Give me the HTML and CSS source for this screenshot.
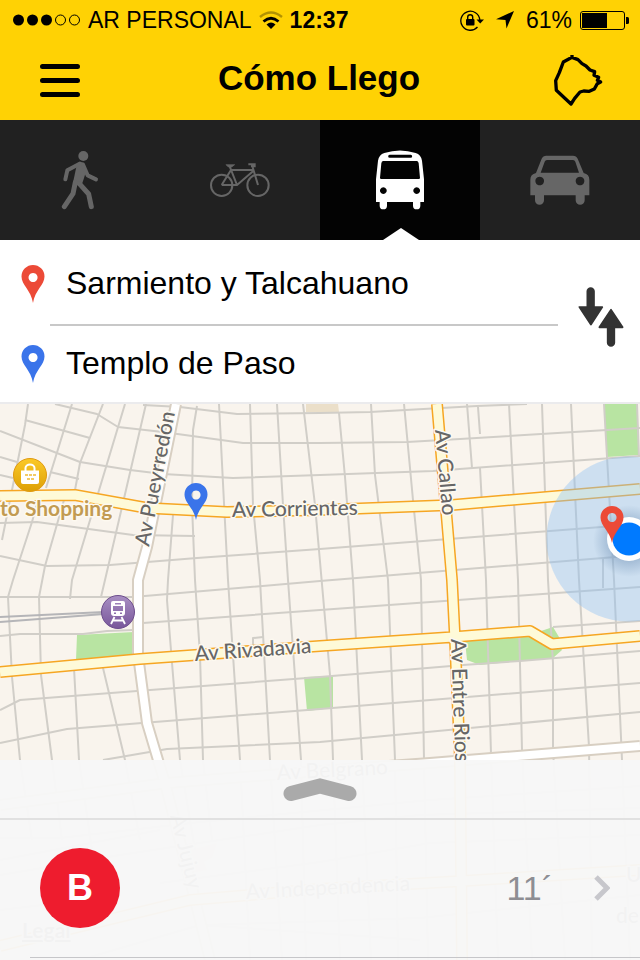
FILE: index.html
```html
<!DOCTYPE html>
<html lang="es">
<head>
    <meta charset="UTF-8">
    <meta name="viewport" content="width=device-width, initial-scale=1.0">
    <title>Cómo Llego</title>
    <link rel="stylesheet" href="styles.css">
</head>
<body>
    <header class="top">
        <div class="status">
            <svg class="signal" width="67" height="12" viewBox="0 0 67 12" aria-hidden="true">
                <circle cx="5.5" cy="6" r="5.5"/>
                <circle cx="19.5" cy="6" r="5.5"/>
                <circle cx="33.5" cy="6" r="5.5"/>
                <circle cx="47.5" cy="6" r="5" fill="none" stroke="#000"/>
                <circle cx="61.5" cy="6" r="5" fill="none" stroke="#000"/>
            </svg>
            <span class="carrier">AR PERSONAL</span>
            <svg class="wifi" width="24" height="19" viewBox="0 0 24 19" fill="none" stroke="#000" aria-hidden="true">
                <path d="M1 6Q12 -3 23 6" stroke-width="2.5" opacity=".3"/>
                <path d="M4.5 10.5Q12 4 19.500 10.5" stroke-width="2.8"/>
                <path d="M7.5 13.5Q12 9.5 16.500 13.5L12 18Z" fill="#000" stroke="none"/>
            </svg>
            <span class="clock">12:37</span>
            <div class="status-right">
                <svg width="24" height="21" viewBox="0 0 24 21" aria-hidden="true">
                    <path d="M17.5 17A9.5 9.5 0 1 1 19.8 10" fill="none" stroke="#000" stroke-width="1.3"/>
                    <path d="M16.5 9.5H24L20.2 13.5Z"/>
                    <rect x="6" y="9" width="8.5" height="6.5" rx="1"/>
                    <path d="M7.7 9V7.2a2.5 2.5 0 0 1 5 0V9" fill="none" stroke="#000" stroke-width="1.4"/>
                </svg>
                <svg width="18" height="18" viewBox="0 0 18 18" aria-hidden="true">
                    <path d="M18 0 10.5 17.5 9.5 9 0 8.3Z"/>
                </svg>
                <span>61%</span>
                <svg class="battery" width="49" height="19" viewBox="0 0 49 19" aria-hidden="true">
                    <rect x=".5" y=".5" width="44" height="18" rx="2.5" fill="none" stroke="#000"/>
                    <rect x="2" y="2" width="25" height="15"/>
                    <path d="M46 6h1.500a1.5 1.5 0 0 1 1.5 1.5v4a1.5 1.5 0 0 1-1.5 1.5H46z"/>
                </svg>
            </div>
        </div>
        <div class="navbar">
            <button type="button" class="icon-btn" aria-label="Menú">
                <svg width="40" height="33" viewBox="0 0 40 33" stroke="#000" stroke-width="5" stroke-linecap="round">
                    <path d="M2.5 2.5h35M2.5 16.5h35M2.5 30.5h35"/>
                </svg>
            </button>
            <h1>Cómo Llego</h1>
            <button type="button" class="icon-btn" aria-label="Ciudad">
                <svg width="52" height="54" viewBox="700 156 156 162" fill="none" stroke="#000" stroke-width="10" stroke-linejoin="round">
                    <path d="M760 162V169L734 183 722 215 711 239 713 268 757 309 768 292 784 273 795 270 812 271 827 264 836 248 846 243 836 238 840 229 826 223 828 212 814 207 802 195 790 188 778 176 760 169"/>
                </svg>
            </button>
        </div>
    </header>

    <nav class="modes">
        <button type="button" class="mode" aria-label="A pie">
            <svg width="38" height="60" viewBox="186 90 114 180" fill="none" stroke="#666" stroke-linecap="round" stroke-linejoin="round">
                <circle cx="253" cy="108" r="15" fill="#666" stroke="none"/>
                <path d="M234 132Q246 120 257 132L260 158 248 196 222 188 230 150Z" fill="#666" stroke="none"/>
                <path d="M242 131 205 151 199 178M252 134 266 166 291 178" stroke-width="12"/>
                <path d="M229 187 222 221 196 260M241 191 269 222 277 260" stroke-width="15"/>
            </svg>
        </button>
        <button type="button" class="mode" aria-label="Bicicleta">
            <svg width="60" height="34" viewBox="629 127 180 102" fill="none" stroke="#666" stroke-width="6">
                <circle cx="664" cy="194" r="32"/>
                <circle cx="773" cy="194" r="32"/>
                <path d="M664 193H710L758 152M664 193 692 148H758M688 137 710 193M773 193 757 140M744 131H763V137H752"/>
                <path d="M677 132H703L694 139H684Z" fill="#666" stroke-width="2"/>
            </svg>
        </button>
        <button type="button" class="mode active" aria-label="Colectivo" aria-current="true">
            <svg width="48" height="60" viewBox="165 92 144 180" fill="#fff">
                <path fill-rule="evenodd" d="M171 124Q174 106 190 101 237 86 284 101 300 106 303 124L309 180V248H298V259a11 11 0 0 1-22 0V248H198V259a11 11 0 0 1-22 0V248H165V180ZM206 106a4 4 0 0 0 0 9H269a4 4 0 0 0 0-9ZM187 125Q182 125 181 132L177 176Q177 179 181 179H293Q297 179 297 176L293 132Q292 125 287 125ZM187 204a10 10 0 1 0 .1 0ZM287 204a10 10 0 1 0 .1 0Z"/>
            </svg>
        </button>
        <button type="button" class="mode" aria-label="Auto">
            <svg width="60" height="50" viewBox="632 106 180 150" fill="#666">
                <path fill-rule="evenodd" d="M650 160 667 117Q671 108 681 108H761Q771 108 775 117L793 160Q810 164 810 180V227H796V242a13 13 0 0 1-27 0V227H674V242a13 13 0 0 1-27 0V227H633V180Q633 164 650 160ZM683 121Q678 121 676 126L664 159H779L768 126Q766 121 761 121ZM661 171a13 13 0 1 0 .1 0ZM782 171a13 13 0 1 0 .1 0Z"/>
            </svg>
        </button>
    </nav>

    <form class="route">
        <div class="fields">
            <div class="field">
                <label for="from" aria-label="Desde">
                    <svg width="24" height="38" viewBox="0 0 24 38"><path fill="#ec4a37" fill-rule="evenodd" d="M12 0A11.5 11.5 0 0 1 23.500 11.5C23.500 20 14 25 12 38 10 25 .5 20 .5 11.5A11.5 11.5 0 0 1 12 0ZM12 8a4.5 4.5 0 1 0 .1 0Z"/></svg>
                </label>
                <input type="text" id="from" value="Sarmiento y Talcahuano">
            </div>
            <hr>
            <div class="field">
                <label for="to" aria-label="Hasta">
                    <svg width="24" height="38" viewBox="0 0 24 38"><path fill="#3a74ea" fill-rule="evenodd" d="M12 0A11.5 11.5 0 0 1 23.500 11.5C23.500 20 14 25 12 38 10 25 .5 20 .5 11.5A11.5 11.5 0 0 1 12 0ZM12 8a4.5 4.5 0 1 0 .1 0Z"/></svg>
                </label>
                <input type="text" id="to" value="Templo de Paso">
            </div>
        </div>
        <button type="button" class="swap" aria-label="Invertir">
            <svg width="46" height="60" viewBox="773 112 138 180" fill="#333" stroke="#333" stroke-linejoin="round">
                <path d="M811 125V175M872 235V279" stroke-width="25" stroke-linecap="round"/>
                <path d="M777 172H846L812 225ZM837 233H907L872 180Z" stroke-width="5"/>
            </svg>
        </button>
    </form>

    <main class="map">
        <svg class="canvas" viewBox="0 404 640 556" preserveAspectRatio="xMidYMin slice">
            <defs>
                <linearGradient id="gold" x1="0" y1="0" x2="0" y2="1">
                    <stop offset="0" stop-color="#fbc928"/>
                    <stop offset="1" stop-color="#dda006"/>
                </linearGradient>
                <linearGradient id="purple" x1="0" y1="0" x2="0" y2="1">
                    <stop offset="0" stop-color="#a98fc3"/>
                    <stop offset="1" stop-color="#78569a"/>
                </linearGradient>
                <radialGradient id="shade">
                    <stop offset=".5" stop-color="#5b7fa8" stop-opacity=".4"/>
                    <stop offset="1" stop-color="#5b7fa8" stop-opacity="0"/>
                </radialGradient>
            </defs>
            <rect y="404" width="640" height="556" fill="#f9f4ed"/>

            <!-- parks and blocks -->
            <path class="block" d="M306 404H338L339 412H306ZM190 850 217 843 212 858 204 862 207 870 192 873Z"/>
            <path class="park" d="M604 404H637L639 455 607 457ZM77 635 134 632V655L76 660ZM304 677 333 676V708L307 711ZM465 641 535 636 552 646 558 642 562 650 553 658 480 665 467 660ZM538 632 553 627 562 642 552 646Z"/>

            <!-- side streets, west to east -->
            <path class="street" d="M143 405 180 407 237 414 320 413 370 412 477 406 527 404
                M55 404 97 414 118 427 163 432 243 443 320 443 407 442 460 439 640 428
                M0 431 80 462 130 470 163 474 233 478 320 475 433 471 473 468 640 456
                M25 420 90 438M50 472 79 479M0 457 17 462M0 475 13 478
                M0 523 37 522 133 535 195 536
                M0 556 47 566 110 565 197 558 320 549 640 524
                M0 597H133L320 581 640 555
                M143 623 320 610 640 587
                M0 636 20 634H83L107 631 133 630M553 627 640 621
                M0 710 20 700 137 691 320 677 463 665 520 661 640 651
                M0 743 67 729 142 723 320 709 640 683
                M103 760 167 749 320 742 640 712
                M253 649V638L263 637"/>
            <!-- side streets, north to south -->
            <path class="street" d="M28 404 25 425 2 540M72 404 46 488M103 404 80 463 75 490
                M38 500 32 522 13 580 8 597 12 677 20 760 32 840
                M64 500 45 566 39 597 41 675 52 760 62 840
                M125 404 72 580 70 599M146 404 105 580 101 597
                M74 668 79 760 92 850M103 668 125 760 140 840
                M173 515 168 580 167 600 172 663 180 760 195 850
                M197 406 193 430 192 505 195 580 200 655 203 760 212 840
                M219 404 224 503 228 580 240 760 250 960
                M250 404 253 505 260 580 270 760 282 960
                M277 404 283 505 288 580 301 760 306 960
                M303 404 315 505 330 675 333 760 340 960
                M339 413 345 477 353 580 362 760 371 960
                M371 404 375 475 388 580 395 760 398 960
                M404 404 413 500 421 580 424 760 428 960
                M467 404 472 468M478 407 480 434M480 468 486 580 491 754 498 960
                M509 404 518 580 522 750 532 960
                M542 404 548 580 553 663V750L565 960
                M571 404 579 580 589 747 592 960
                M604 404 614 580 622 760 630 960M637 404 639 457M603 558V588"/>
            <!-- south of Belgrano -->
            <path class="street" d="M0 838H60L200 822 430 800 640 786M0 875 120 855 320 825 420 815 640 808
                M0 860 160 830M0 910 120 896M160 883 320 862 430 843 640 835M205 925 420 918 640 895M90 957 200 925 420 940"/>
            <path class="rail" d="M0 617 104 612M0 622 104 614"/>

            <!-- avenues -->
            <path class="road-edge" d="M176 404 147 547 138 580V655L147 723 158 760 165 783 195 900 210 960M0 805 167 783 320 771 430 763 640 746"/>
            <path class="road" d="M176 404 147 547 138 580V655L147 723 158 760 165 783 195 900 210 960M0 805 167 783 320 771 430 763 640 746"/>
            <path class="avenue-edge" d="M437 404 452 580 455 640 460 760 462 960M0 496 75 495 147 508 227 512 320 510 452 505 640 489M0 672 140 659 320 646 453 637 530 631 552 644 640 636M0 946 190 900 320 889 463 881 640 870"/>
            <path class="avenue" d="M437 404 452 580 455 640 460 760 462 960M0 496 75 495 147 508 227 512 320 510 452 505 640 489M0 672 140 659 320 646 453 637 530 631 552 644 640 636M0 946 190 900 320 889 463 881 640 870"/>

            <!-- labels -->
            <g class="labels">
                <text transform="translate(149 547) rotate(-79)">Av Pueyrredón</text>
                <text transform="translate(232 517) rotate(-1)">Av Corrientes</text>
                <text transform="translate(435 430) rotate(85)">Av Callao</text>
                <text transform="translate(195 661) rotate(-4)">Av Rivadavia</text>
                <text transform="translate(451 639) rotate(88)">Av Entre Rios</text>
                <text transform="translate(277 780) rotate(-3)">Av Belgrano</text>
                <text transform="translate(170 816) rotate(76)">Av Jujuy</text>
                <text transform="translate(246 899) rotate(-3)">Av Independencia</text>
                <text x="626" y="882">U</text>
                <text x="616" y="923">de</text>
                <text class="legal" x="22" y="938">Legal</text>
                <text class="shop" x="0" y="516">to Shopping</text>
            </g>

            <!-- places -->
            <circle cx="30" cy="475" r="16.5" fill="url(#gold)" stroke="#e09a10"/>
            <path d="M21 470.5H39V482Q39 484 37 484H23Q21 484 21 482Z" fill="#fff"/>
            <path d="M25.5 471V468a4.5 3.5 0 0 1 9 0V471" fill="none" stroke="#fff" stroke-width="2"/>
            <path d="M25 475H36M27 479H34" stroke="#efbb33" stroke-width="1.5" stroke-dasharray="3 1"/>
            <circle cx="118" cy="612" r="16.5" fill="url(#purple)" stroke="#6d4d8d"/>
            <path d="M113 601H123Q125 601 125 603V613Q125 616 122 616H114Q111 616 111 613V603Q111 601 113 601ZM115 603V604.5H121V603ZM113 606V611H123V606ZM114 612.5V614H116V612.5ZM120 612.5V614H122V612.5Z" fill="#fff" fill-rule="evenodd"/>
            <path d="M114.5 617 111 624M121.5 617 125 624M113 620.5H123" stroke="#fff" stroke-width="1.8"/>

            <!-- current position -->
            <circle cx="629" cy="539" r="82.5" fill="#8dc0f4" fill-opacity=".4"/>
            <circle cx="629" cy="541" r="36" fill="url(#shade)"/>
            <circle cx="629" cy="539" r="22" fill="#fff"/>
            <circle cx="629" cy="539" r="16.5" fill="#007aff"/>
            <path transform="translate(600 506)" fill="#ec4a37" fill-rule="evenodd" d="M12 0A11.5 11.5 0 0 1 23.500 11.5C23.500 20 14 25 12 37 10 25 .5 20 .5 11.5A11.5 11.5 0 0 1 12 0ZM12 7a4.5 4.5 0 1 0 .1 0Z"/>
            <path transform="translate(184 483)" fill="#3a74ea" fill-rule="evenodd" d="M12 0A11.5 11.5 0 0 1 23.500 11.5C23.500 20 14 25 12 37 10 25 .5 20 .5 11.5A11.5 11.5 0 0 1 12 0ZM12 7.500a4.5 4.5 0 1 0 .1 0Z"/>
        </svg>

        <section class="sheet">
            <button type="button" class="handle" aria-label="Ver recorridos">
                <svg width="74" height="26" viewBox="0 0 74 26" fill="none" stroke="#aaa" stroke-width="15" stroke-linecap="round">
                    <path d="M8 17.5 37 10 66 17.5"/>
                </svg>
            </button>
            <a href="#" class="result">
                <span class="line">B</span>
                <span class="minutes">11´</span>
                <svg width="16" height="26" viewBox="0 0 16 26" fill="none" stroke="#c7c7cc" stroke-width="5">
                    <path d="M2 2 13 13 2 24"/>
                </svg>
            </a>
        </section>
    </main>
</body>
</html>
```
FILE: styles.css
```css
* {
    box-sizing: border-box;
}
body {
    margin: 0;
    min-height: 100vh;
    display: flex;
    flex-direction: column;
    font-family: "Liberation Sans", Arial, sans-serif;
    color: #000;
    background: #fff;
}
svg {
    display: block;
    flex-shrink: 0;
}
button {
    border: none;
    padding: 0;
    background: none;
    cursor: pointer;
}

/* header */
.top {
    background: #ffd204;
}
.status {
    display: flex;
    align-items: center;
    height: 40px;
    padding: 0 11px 0 13px;
    font-size: 23px;
    white-space: nowrap;
}
.carrier {
    margin: 0 7px 0 8px;
}
.clock {
    margin-left: 7px;
    font-weight: bold;
}
.status-right {
    display: flex;
    align-items: center;
    margin-left: auto;
}
.status-right span {
    margin: 0 8px 0 12px;
}
.status-right svg + svg {
    margin-left: 12px;
}
.navbar {
    display: flex;
    align-items: center;
    justify-content: space-between;
    height: 80px;
    padding: 0 36px 0 40px;
}
.icon-btn {
    min-width: 46px;
}
.navbar h1 {
    margin: 0;
    padding-bottom: 4px;
    font-size: 35px;
    font-weight: bold;
}

/* travel modes */
.modes {
    display: grid;
    grid-template-columns: repeat(4, 1fr);
    height: 120px;
    background: #212121;
}
.mode {
    position: relative;
    display: flex;
    align-items: center;
    justify-content: center;
}
.mode.active {
    background: #030303;
}
.mode.active::after {
    content: "";
    position: absolute;
    bottom: 0;
    left: 50%;
    margin-left: -17px;
    width: 36px;
    height: 12px;
    background: #fff;
    clip-path: polygon(50% 0, 100% 100%, 0 100%);
}

/* addresses */
.route {
    display: flex;
    border-bottom: 2px solid #ebebed;
}
.fields {
    flex: 1;
}
.field {
    display: flex;
    align-items: center;
    gap: 21px;
    height: 76px;
    padding-left: 21px;
}
.field:first-child {
    height: 84px;
    padding-top: 4px;
}
.field input {
    flex: 1;
    min-width: 0;
    padding: 0 0 2px;
    border: none;
    outline: none;
    background: none;
    font: inherit;
    font-size: 32px;
}
.fields hr {
    height: 2px;
    margin: 0 0 0 50px;
    border: none;
    background: #c8c8c8;
}
.swap {
    width: 82px;
    padding: 0 0 8px 20px;
}

/* map */
.map {
    flex: 1;
    display: grid;
    grid-template-rows: minmax(500px, 1fr);
}
.canvas {
    grid-area: 1 / 1;
    width: 100%;
    height: 0;
    min-height: 100%;
}
.block {
    fill: #ebdfc9;
}
.park {
    fill: #b8e4a2;
}
.street,
.rail,
.road,
.road-edge,
.avenue,
.avenue-edge {
    fill: none;
    stroke-linejoin: round;
}
.street {
    stroke: #d1cec8;
    stroke-width: 2;
}
.rail {
    stroke: #b5b5b8;
    stroke-width: 2;
}
.road-edge {
    stroke: #d8cfc2;
    stroke-width: 12;
}
.road {
    stroke: #fff;
    stroke-width: 8;
}
.avenue-edge {
    stroke: #f6a623;
    stroke-width: 12;
}
.avenue {
    stroke: #fefad8;
    stroke-width: 9;
}
.labels {
    font-family: Lato, sans-serif;
    font-size: 21px;
    font-weight: 500;
    fill: #666;
    stroke: #fdf9f0;
    stroke-width: 3px;
    stroke-linejoin: round;
    paint-order: stroke;
}
.labels .shop {
    font-weight: bold;
    fill: #c29b52;
}
.labels .legal {
    font-weight: bold;
    text-decoration: underline;
}

/* results */
.sheet {
    grid-area: 1 / 1;
    align-self: end;
    display: flex;
    flex-direction: column;
    padding-bottom: 2px;
    background: rgba(247, 247, 247, 0.97);
    z-index: 1;
}
.handle {
    display: flex;
    align-items: center;
    justify-content: center;
    height: 60px;
    border-bottom: 2px solid #e1e1e1;
}
.result {
    display: flex;
    align-items: center;
    height: 138px;
    margin-left: 30px;
    padding: 0 30px 1px 10px;
    border-bottom: 1px solid #c6c6c9;
    color: #8e8e93;
    text-decoration: none;
}
.line {
    display: flex;
    align-items: center;
    justify-content: center;
    width: 80px;
    height: 80px;
    border-radius: 50%;
    background: #ee1c2e;
    color: #fff;
    font-size: 36px;
    font-weight: bold;
}
.minutes {
    margin: 0 41px 0 auto;
    font-size: 34px;
}
```
